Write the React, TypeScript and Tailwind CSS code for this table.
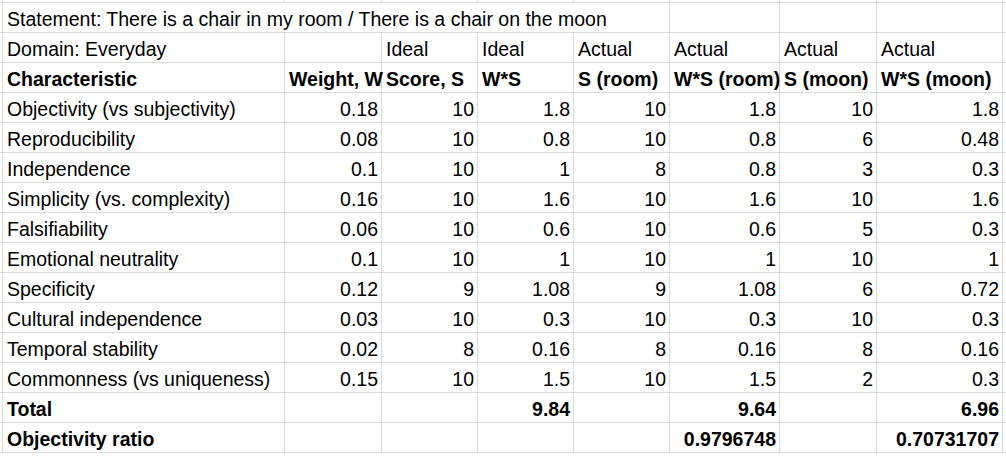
const rows: string[][] = [
  ["Objectivity (vs subjectivity)", "0.18", "10", "1.8", "10", "1.8", "10", "1.8"],
  ["Reproducibility", "0.08", "10", "0.8", "10", "0.8", "6", "0.48"],
  ["Independence", "0.1", "10", "1", "8", "0.8", "3", "0.3"],
  ["Simplicity (vs. complexity)", "0.16", "10", "1.6", "10", "1.6", "10", "1.6"],
  ["Falsifiability", "0.06", "10", "0.6", "10", "0.6", "5", "0.3"],
  ["Emotional neutrality", "0.1", "10", "1", "10", "1", "10", "1"],
  ["Specificity", "0.12", "9", "1.08", "9", "1.08", "6", "0.72"],
  ["Cultural independence", "0.03", "10", "0.3", "10", "0.3", "10", "0.3"],
  ["Temporal stability", "0.02", "8", "0.16", "8", "0.16", "8", "0.16"],
  ["Commonness (vs uniqueness)", "0.15", "10", "1.5", "10", "1.5", "2", "0.3"],
];

const header1 = ["Domain: Everyday", "", "Ideal", "Ideal", "Actual", "Actual", "Actual", "Actual"];
const header2 = ["Characteristic", "Weight, W", "Score, S", "W*S", "S (room)", "W*S (room)", "S (moon)", "W*S (moon)"];
const total = ["Total", "", "", "9.84", "", "9.64", "", "6.96"];
const ratio = ["Objectivity ratio", "", "", "", "", "0.9796748", "", "0.70731707"];

// spreadsheet cell: right + bottom gridline, 30px row
function Cell({
  children,
  right = false,
  bold = false,
}: {
  children?: React.ReactNode;
  right?: boolean;
  bold?: boolean;
}) {
  return (
    <div
      className={`h-[30px] whitespace-nowrap border-b border-r border-[#dadada] pt-[3px] leading-[26px] ${
        right ? "pr-[3px] text-right" : "pl-[4px] text-left"
      } ${bold ? "font-bold" : ""}`}
    >
      {children}
    </div>
  );
}

// empty gridline cell (the slivers of neighbouring rows / columns)
function Edge({ h = "h-[30px]" }: { h?: string }) {
  return <div className={`${h} border-b border-r border-[#dadada]`} />;
}

function Row({ cells, bold = false, text = false }: { cells: string[]; bold?: boolean; text?: boolean }) {
  return (
    <>
      <Edge />
      {cells.map((c, i) => (
        <Cell key={i} right={i > 0 && !text} bold={bold}>
          {c}
        </Cell>
      ))}
      <Edge />
    </>
  );
}

export default function App() {
  return (
    <div className="h-[457px] w-[1006px] overflow-hidden bg-white text-[19.5px] text-black [font-family:'Liberation_Sans',Arial,sans-serif]">
      <div className="grid grid-cols-[3px_282px_97px_96px_96px_96px_110px_97px_126px_40px]">
        {Array.from({ length: 10 }).map((_, i) => (
          <Edge key={i} h="h-[3px]" />
        ))}

        {/* statement text spills over columns A–E */}
        <Edge />
        <div className="col-span-5 h-[30px] whitespace-nowrap border-b border-r border-[#dadada] pl-[4px] pt-[3px] leading-[26px]">
          Statement: There is a chair in my room / There is a chair on the moon
        </div>
        <Cell />
        <Cell />
        <Cell />
        <Edge />

        <Row cells={header1} text />
        <Row cells={header2} bold text />
        {rows.map((r) => (
          <Row key={r[0]} cells={r} />
        ))}
        <Row cells={total} bold />
        <Row cells={ratio} bold />
      </div>
    </div>
  );
}
